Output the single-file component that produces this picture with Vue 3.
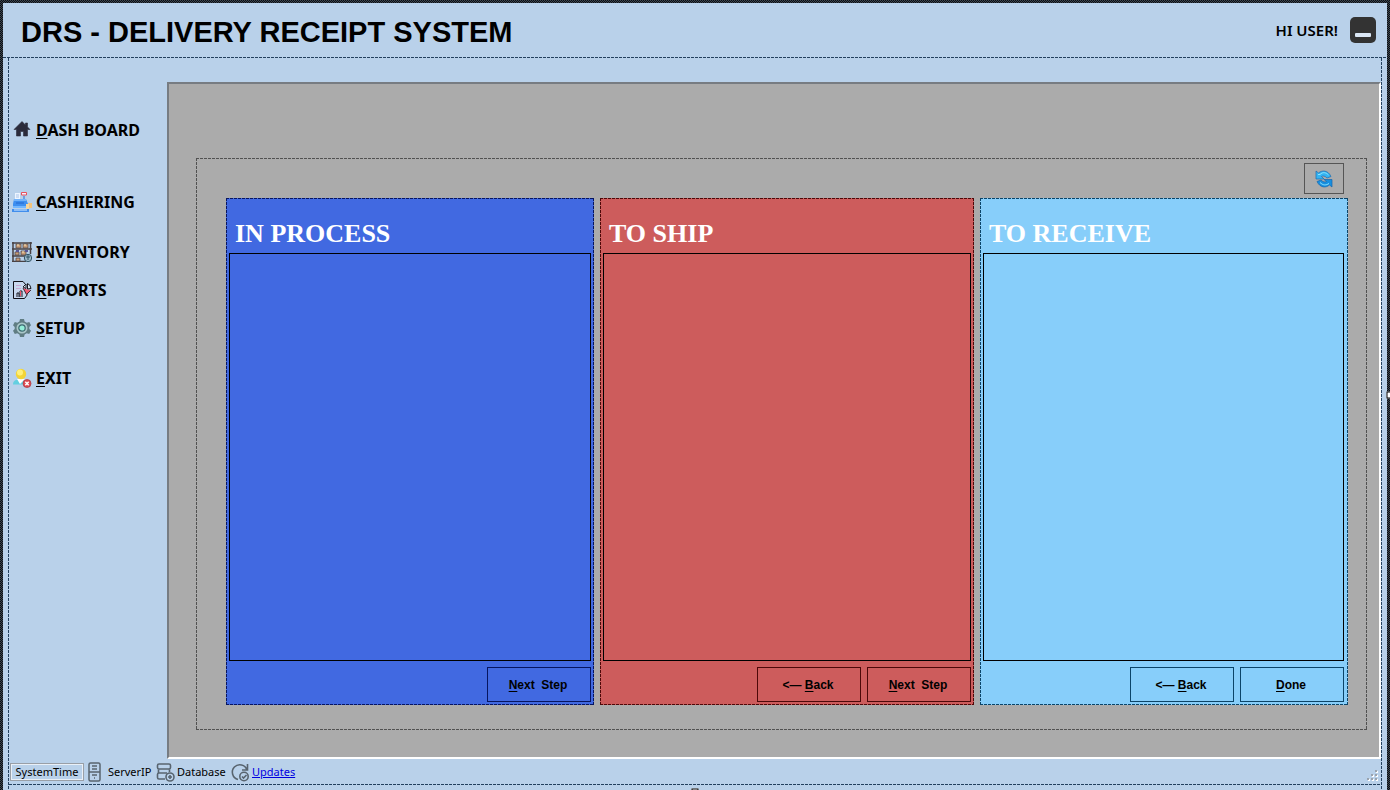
<script setup>
const menu = [
  { id: 'home', key: 'D', rest: 'ASH BOARD' },
  { id: 'cash', key: 'C', rest: 'ASHIERING' },
  { id: 'inventory', key: 'I', rest: 'NVENTORY' },
  { id: 'reports', key: 'R', rest: 'EPORTS' },
  { id: 'setup', key: 'S', rest: 'ETUP' },
  { id: 'exit', key: 'E', rest: 'XIT' }
]
const back = { pre: '<— ', key: 'B', rest: 'ack' }
const next = { pre: '', key: 'N', rest: 'ext  Step' }
const done = { pre: '', key: 'D', rest: 'one' }
const columns = [
  { id: 'process', title: 'IN PROCESS', actions: [next] },
  { id: 'ship', title: 'TO SHIP', actions: [back, next] },
  { id: 'receive', title: 'TO RECEIVE', actions: [back, done] }
]
</script>

<template>
  <div class="window">
    <div class="surface">
      <header class="titlebar">
        <h1>DRS - DELIVERY RECEIPT SYSTEM</h1>
        <div class="user">
          <span>HI USER!</span>
          <button class="minimize" aria-label="Minimize"><i></i></button>
        </div>
      </header>

      <div class="body">
        <div class="content dashed">
          <div class="workspace">
            <nav class="sidebar">
              <button v-for="m in menu" :key="m.id" :class="['item', m.id]">
                <svg v-if="m.id === 'home'" viewBox="0 0 20 20">
                  <path d="M10 1.500 2 9.500h2.500V16h4v-4.500h3V16h4V9.500H18l-2.500-2.600V3h-2v2z" fill="#2b2b3b" stroke="#2b2b3b" stroke-width=".6" stroke-linejoin="round" />
                </svg>
                <svg v-else-if="m.id === 'cash'" viewBox="0 0 20 20">
                  <path d="M3 1h5v8H3z" fill="#eef5ff" /><path d="M4 3h3M4 5h3" stroke="#a9c4e8" />
                  <path d="M9.500.5h5v2.500h-5z" fill="#f4f4ff" stroke="#e8505c" /><path d="M12 4v3" stroke="#6b9fe0" stroke-width="2" />
                  <path d="M2 7h12l2 5v4H1v-4z" fill="#3d8ff0" /><path d="M2 7h12v2H2z" fill="#74b4fa" />
                  <path d="M4 11h8" stroke="#2467cc" /><path d="M1 14h15v2H1z" fill="#72b7ff" />
                  <path d="M0 17h17v3H0z" fill="#428eec" /><path d="M2 18h13" stroke="#d9edff" />
                  <path d="M16 11h4v5h-3z" fill="#f4c47c" /><path d="M14 12h3v5h-3z" fill="#f7d79e" />
                </svg>
                <svg v-else-if="m.id === 'inventory'" viewBox="0 0 20 20">
                  <path d="M1 0v20M18.500 0v12M0 7h20M0 14h14M0 19.500h14M0 1h20" stroke="#494143" stroke-width="1.500" />
                  <path d="M4 2h5v4H4zM11 2h5v4h-5zM3 10h4v3H3zM9 9h5v4H9zM4 16h4v3H4z" fill="#c99e79" stroke="#57494a" stroke-width=".8" />
                  <path d="M6 2v2M13 2v2M11 9v2" stroke="#f8e7bd" /><path d="M4 8h3v2H4zM13 8h3v2h-3z" fill="#5a5795" />
                  <circle cx="16" cy="16" r="3.700" fill="#9cb8c9" stroke="#315465" /><path d="M16 13v5M14 15h4" stroke="#315465" />
                </svg>
                <svg v-else-if="m.id === 'reports'" viewBox="0 0 20 20">
                  <path d="M14 5 11 1.500H1.500v17h11l3-4" fill="#c8d8ee" stroke="#101018" />
                  <path d="M4 5.500h5M4 8.500h5" stroke="#c9a9d3" /><path d="M5 17v-4h2v4m1 0v-6h2v6" fill="none" stroke="#171720" />
                  <path d="M8.500 11v5" stroke="#ed5269" /><path d="M11 8l4.500 1.500L19 10l-4.500 5z" fill="#f05970" />
                  <path d="m11 7 3-3v4.500zM15.500 3.500q3 1 3.500 5l-3.500.5z" fill="#dbe7f5" stroke="#17171f" /><path d="m11 8 3.500 6.500L19 10" fill="none" stroke="#17171f" stroke-width=".8" />
                </svg>
                <svg v-else-if="m.id === 'setup'" viewBox="0 0 20 20">
                  <path d="m8 1h4l.6 2.600 2.200 1.200L17.300 4 19 7.300 17.300 9v2l1.700 1.700-1.800 3.300-2.500-.8-2.100 1.200L12 19H8l-.6-2.600-2.100-1.200-2.500.8L1 12.700 2.700 11V9L1 7.300 2.800 4l2.500.8 2.100-1.200z" fill="#607d83" />
                  <circle cx="10" cy="10" r="5.500" fill="#a9c7c9" /><circle cx="10" cy="10" r="3.200" fill="#93efd8" stroke="#3e6870" stroke-width="1.200" />
                </svg>
                <svg v-else viewBox="0 0 20 20">
                  <path d="M1 16.500c0-4 3-5 6-5s8 1 8 5z" fill="#64cfe0" /><path d="M5 11h8l-5 5z" fill="#fff" />
                  <circle cx="9" cy="6" r="5.200" fill="#f3d437" /><circle cx="8" cy="4.500" r="3" fill="#fff07a" />
                  <circle cx="15" cy="15.500" r="4" fill="#df4850" stroke="#a94149" stroke-width=".8" />
                  <path d="m13.300 13.800 3.400 3.400m0-3.400-3.400 3.400" stroke="#fff" stroke-width="1.500" />
                </svg>
                <span><u>{{ m.key }}</u>{{ m.rest }}</span>
              </button>
            </nav>

            <main class="stage">
              <section class="board dashed">
                <div class="toolbar">
                  <button class="refresh" aria-label="Refresh">
                    <svg viewBox="0 0 18 18">
                      <path d="M1 1 3.500 3C7 0 13 0 16 6.500l-4 1.500C10 6 8 5.500 6.500 6.500L9 9H1z" fill="#35b4f2" stroke="#1b6ab0" stroke-width=".7" />
                      <path d="m17 17-2.500-2C11 18 5 18 2 11.500L6 10c2 2 4 2.500 5.500 1.500L9 9.500h8z" fill="#168fe0" stroke="#1765ac" stroke-width=".7" />
                      <path d="M3 4.500h2c3-3 6-2 8.500.5M5 12.500c3 3 6 3 9 1" fill="none" stroke="#8ee6ff" />
                    </svg>
                  </button>
                </div>
                <div class="columns">
                  <article v-for="c in columns" :key="c.id" :class="['column', 'dashed', c.id]">
                    <h2>{{ c.title }}</h2>
                    <div class="list"></div>
                    <div class="actions">
                      <button v-for="a in c.actions" :key="a.key">{{ a.pre }}<u>{{ a.key }}</u>{{ a.rest }}</button>
                    </div>
                  </article>
                </div>
              </section>
            </main>
          </div>

          <footer class="status">
            <span class="time">SystemTime</span>
            <svg class="server" viewBox="0 0 20 20" fill="none" stroke="#58646f" stroke-width="1.500">
              <rect x="4" y="1" width="11" height="18" rx="1.500" /><path d="M4 10h11M7 4h5M7 7h5M7 13h5M9 16h1" />
            </svg>
            <span class="ip">ServerIP</span>
            <svg class="db" viewBox="0 0 20 20" fill="none" stroke="#58646f" stroke-width="1.600">
              <path d="M9 17H3q-1.500 0-1.500-1.500v-3Q1.500 11 3 11h8M3 2h10q1.500 0 1.500 1.500v2Q14.500 7 13 7H3Q1.500 7 1.500 5.500v-2Q1.500 2 3 2zM2.500 7v4M13.500 7v3" />
              <circle cx="14" cy="15" r="4" /><path d="M14 13v4M12 15h4" />
            </svg>
            <span class="dbname">Database</span>
            <svg class="upd" viewBox="0 0 20 20" fill="none" stroke="#58646f" stroke-width="1.600">
              <path d="M17 8A7.500 7.500 0 1 0 8 17.500M17.500 2v6H12" /><circle cx="14" cy="14.500" r="4.200" /><path d="m12 14.500 1.500 1.500 3-3" />
            </svg>
            <a href="#">Updates</a>
            <svg class="grip" viewBox="0 0 12 12">
              <path d="M9 1h2v2H9zM5 5h2v2H5zM9 5h2v2H9zM1 9h2v2H1zM5 9h2v2H5zM9 9h2v2H9z" fill="#fff" />
              <path d="M8 0h2v2H8zM4 4h2v2H4zM8 4h2v2H8zM0 8h2v2H0zM4 8h2v2H4zM8 8h2v2H8z" fill="#9aa3ae" />
            </svg>
          </footer>
        </div>
      </div>
    </div>
    <i class="handle right"></i>
    <i class="handle bottom"></i>
  </div>
</template>

<style>
body { margin: 0; background: #b9d1ea; }
</style>

<style scoped>
* { box-sizing: border-box; }
button { font: inherit; color: inherit; background: none; border: 0; padding: 0; margin: 0; }
svg { display: block; flex: none; }
u { text-underline-offset: 2px; text-decoration-thickness: 1px; }

.window {
  --line: #23405e;
  position: relative;
  height: 100vh;
  min-height: 560px;
  padding: 3px 3px 0;
  overflow: hidden;
  color: #000;
  font-family: "Noto Sans", "Open Sans", sans-serif;
  background: repeating-conic-gradient(#0b0f14 0 25%, #3d454e 0 50%) 0 0 / 2px 2px;
}
.surface {
  height: 100%;
  display: flex;
  flex-direction: column;
  background: #b9d1ea;
}
.dashed {
  background-image:
    repeating-linear-gradient(90deg, var(--line) 0 3px, transparent 3px 4px),
    repeating-linear-gradient(90deg, var(--line) 0 3px, transparent 3px 4px),
    repeating-linear-gradient(180deg, var(--line) 0 3px, transparent 3px 4px),
    repeating-linear-gradient(180deg, var(--line) 0 3px, transparent 3px 4px);
  background-size: 100% 1px, 100% 1px, 1px 100%, 1px 100%;
  background-position: 0 0, 0 100%, 0 0, 100% 0;
  background-repeat: no-repeat;
}
.content.dashed { background-size: 0 0, 0 0, 1px 100%, 1px 100%; }
.titlebar {
  height: 55px;
  flex: none;
  display: flex;
  align-items: center;
  justify-content: space-between;
  padding: 0 11px 1px 18px;
  background: repeating-linear-gradient(90deg, var(--line) 0 3px, transparent 3px 4px) 0 100% / 100% 1px no-repeat;
}
h1 {
  margin: 4px 0 0;
  font: 700 29px/36px "Liberation Sans", Arial, sans-serif;
  white-space: nowrap;
}
.user { display: flex; align-items: center; gap: 12px; font-size: 15px; font-weight: 600; }
.minimize {
  width: 26px;
  height: 26px;
  border-radius: 5px;
  background: #333;
  display: flex;
  align-items: flex-end;
  justify-content: center;
  padding-bottom: 6px;
}
.minimize i { width: 16px; height: 4px; background: #dbe7f5; border-radius: 1px; }

.body { flex: 1; min-height: 0; padding: 0 5px; display: flex; }
.content { flex: 1; display: flex; flex-direction: column; padding: 0 1px; }
.workspace { flex: 1; min-height: 0; display: flex; padding-top: 24px; }
.sidebar {
  width: 158px;
  flex: none;
  display: flex;
  flex-direction: column;
  align-items: flex-start;
  gap: 14px;
  padding: 36px 0 0 3px;
  font-size: 16px;
  font-weight: 700;
}
.item { display: flex; align-items: center; gap: 4px; height: 24px; white-space: nowrap; }
.item svg { width: 20px; height: 20px; }
.item.cash { margin-top: 34px; }
.item.inventory, .item.exit { margin-top: 12px; }

.stage {
  flex: 1;
  display: flex;
  background: #ababab;
  border: 2px solid;
  border-color: #777c82 #fff #fff #777c82;
  padding: 74px 12px 27px 27px;
}
.board {
  --line: #515151;
  flex: 1;
  display: flex;
  flex-direction: column;
  padding: 5px 19px 25px 30px;
}
.toolbar { display: flex; justify-content: flex-end; padding-right: 4px; margin-bottom: 4px; }
.refresh {
  width: 40px;
  height: 31px;
  border: 1px solid #555;
  display: grid;
  place-items: center;
}
.refresh svg { width: 18px; height: 18px; }
.columns { flex: 1; display: grid; grid-template-columns: 368fr 374fr 368fr; gap: 6px; }
.column { display: flex; flex-direction: column; padding: 3px; }
.process { --line: #061560; background-color: #4169e1; }
.ship { --line: #4d0808; background-color: #cd5c5c; }
.receive { --line: #0b4468; background-color: #87cefa; padding-right: 4px; }
h2 {
  margin: 0;
  height: 52px;
  padding: 17px 0 0 6px;
  color: #fff;
  font: 700 26px/32px "Liberation Serif", "Times New Roman", serif;
  white-space: nowrap;
}
.list { flex: 1; border: 1px solid #000; }
.actions {
  display: flex;
  justify-content: flex-end;
  gap: 6px;
  margin-top: 6px;
  font: 700 12px/16px "Liberation Sans", Arial, sans-serif;
}
.actions button { width: 104px; height: 35px; padding-right: 2px; border: 1px solid var(--line); white-space: pre; }

.status {
  height: 26px;
  flex: none;
  display: flex;
  align-items: center;
  margin-bottom: 5px;
  padding: 0 2px 0 1px;
  font-size: 11px;
  line-height: 16px;
  background: repeating-linear-gradient(90deg, var(--line) 0 3px, transparent 3px 4px) 0 100% / 100% 1px no-repeat;
}
.status svg { width: 20px; height: 20px; }
.time {
  width: 74px;
  text-align: center;
  border: 1px solid #999fa7;
  outline: 1px solid #e9f0f8;
  outline-offset: -2px;
}
.server { margin-left: 1px; }
.ip { width: 46px; margin-left: 3px; }
.db { margin-left: 2px; }
.dbname { width: 50px; margin-left: 1px; }
.upd { margin-left: 3px; }
.status a { margin-left: 2px; color: #0000e0; }
.status svg.grip { width: 12px; height: 12px; margin-left: auto; margin-top: 8px; }

.handle { position: absolute; width: 7px; height: 7px; background: #fff; border: 1px solid #000; transform: translate(-50%, -50%); }
.handle.right { right: -7px; top: 50%; }
.handle.bottom { bottom: -9px; left: 50%; }
</style>
